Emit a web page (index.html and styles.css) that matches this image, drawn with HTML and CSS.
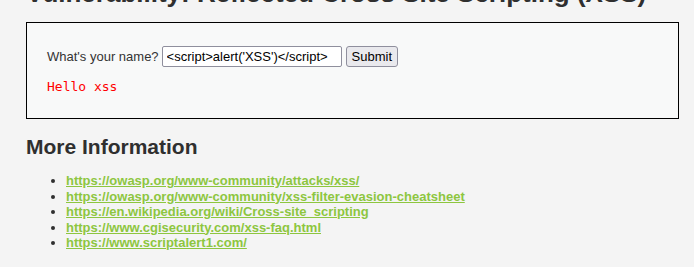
FILE: index.html
```html
<!DOCTYPE html>
<html>
<head>
<meta charset="utf-8">
<link rel="stylesheet" href="styles.css">
</head>
<body>
<div class="page">
  <h1 class="title">Vulnerability: Reflected Cross Site Scripting (XSS)</h1>
  <div class="vuln-box">
    <form class="name-form">
      <label class="name-label">What's your name?</label>
      <input class="name-input" type="text" value="&lt;script&gt;alert('XSS')&lt;/script&gt;">
      <button class="submit-btn" type="button">Submit</button>
    </form>
    <pre class="result">Hello xss</pre>
  </div>
  <h2 class="more-title">More Information</h2>
  <ul class="links">
    <li><a href="#">https://owasp.org/www-community/attacks/xss/</a></li>
    <li><a href="#">https://owasp.org/www-community/xss-filter-evasion-cheatsheet</a></li>
    <li><a href="#">https://en.wikipedia.org/wiki/Cross-site_scripting</a></li>
    <li><a href="#">https://www.cgisecurity.com/xss-faq.html</a></li>
    <li><a href="#">https://www.scriptalert1.com/</a></li>
  </ul>
</div>
</body>
</html>
```
FILE: styles.css
```css
html, body {
  margin: 0;
  padding: 0;
  background: #f4f4f4;
}
body {
  font-family: "Liberation Sans", Arial, sans-serif;
  font-size: 13px;
  color: #2f2f2f;
  overflow: hidden;
}
.page {
  padding: 0 15px 0 26px;
  margin-top: -22px;
}
.title {
  font-size: 26px;
  font-weight: bold;
  color: #2f2f2f;
  margin: 0 0 14px 0;
  line-height: 30px;
  white-space: nowrap;
}
.vuln-box {
  background: #f8f9f9;
  border: 1px solid #000;
  padding: 23px 20px 0 20px;
  height: 72px;
}
.name-form {
  display: flex;
  align-items: center;
  margin: 0;
  height: 21px;
}
.name-label {
  margin-right: 3px;
  color: #333;
}
.name-input {
  font-family: "Liberation Sans", Arial, sans-serif;
  font-size: 13px;
  width: 180px;
  height: 21px;
  box-sizing: border-box;
  border: 1px solid #8f8f9d;
  border-radius: 2px;
  background: #fff;
  padding: 1px 4px;
  margin: 0 4px 0 0;
  color: #000;
}
.submit-btn {
  font-family: "Liberation Sans", Arial, sans-serif;
  font-size: 13px;
  height: 21px;
  box-sizing: border-box;
  padding: 0 5px;
  border: 1px solid #8f8f9d;
  border-radius: 3px;
  background: #e9e9ed;
  color: #000;
  margin: 0;
}
.result {
  font-family: "DejaVu Sans Mono", monospace;
  font-size: 13px;
  color: #ff0000;
  margin: 12px 0 0 0;
  line-height: 16px;
}
.more-title {
  font-size: 21px;
  font-weight: bold;
  color: #2f2f2f;
  margin: 15px 0 0 0;
  line-height: 26px;
}
.links {
  margin: 13px 0 0 0;
  padding-left: 40px;
}
.links li {
  line-height: 15.5px;
}
.links a {
  color: #8dc63f;
  font-weight: bold;
  text-decoration: underline;
}
```
